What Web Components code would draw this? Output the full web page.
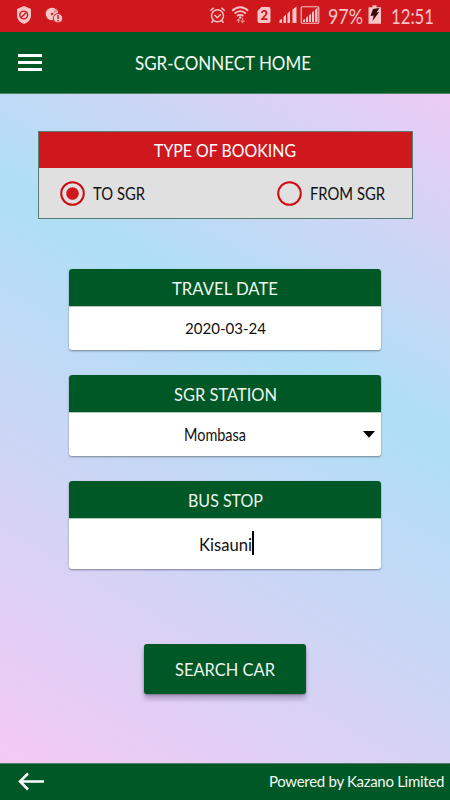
<!DOCTYPE html>
<html lang="en">
<head>
<meta charset="utf-8">
<title>SGR-Connect</title>
<style>
body{margin:0;height:800px;overflow:hidden;font-family:Lato,"Noto Sans",sans-serif}
</style>
</head>
<body>
<sgr-app></sgr-app>
<script>
const define=(name,html,setup)=>customElements.define(name,class extends HTMLElement{
  connectedCallback(){
    if(this.shadowRoot)return;
    const t=document.createElement('template');
    t.innerHTML=html;
    this.attachShadow({mode:'open'}).append(t.content.cloneNode(true));
    if(setup)setup(this);
  }
});

/* A label whose glyphs are fitted to a given advance width. */
define('fit-label',`<style>
:host{display:block;flex:none;line-height:0}
svg{display:block;overflow:visible;margin:0 -2px}
text{fill:currentColor;font-family:Lato,"Noto Sans",sans-serif}
</style><svg><text></text></svg>`,el=>{
  const w=+el.getAttribute('width'),s=+el.getAttribute('size')||18;
  const svg=el.shadowRoot.querySelector('svg'),t=svg.firstChild;
  svg.setAttribute('width',w+4);svg.setAttribute('height',24);
  t.setAttribute('x',2);
  t.setAttribute('y',el.getAttribute('baseline')||19);t.setAttribute('font-size',s);
  t.setAttribute('textLength',w);t.setAttribute('lengthAdjust','spacingAndGlyphs');
  t.textContent=el.getAttribute('text');
});

define('status-bar',`<style>
:host{display:flex;height:32px;background:#cf181e;color:#f8c5c7;align-items:center}
svg{display:block;flex:none}
</style>
<svg width="328" height="32" viewBox="0 0 328 32">
<path d="M24 6l7 3v7q0 5-7 8q-7-3-7-8V9z" fill="#f8c5c7"/>
<circle cx="23.7" cy="15" r="3.9" fill="none" stroke="#cf181e" stroke-width="1.4"/><path d="M21 17.6l5.4-5.2" stroke="#cf181e" stroke-width="1.4"/>
<circle cx="52" cy="14" r="6.3" fill="#f8c5c7"/><path d="M52 14L56 8.6L58 11z" fill="#e88d90"/><circle cx="52" cy="14" r="1.2" fill="#cf181e"/>
<circle cx="58" cy="18.2" r="4.7" fill="#f8c5c7" stroke="#cf181e"/><path d="M58 15v4m0 1v1.5" stroke="#cf181e" stroke-width="1.5"/>
<g fill="none" stroke="#f8c5c7" stroke-width="1.5"><circle cx="217.5" cy="15.8" r="6"/><path d="M210.3 10.8l3.3-3m7.8 0l3.3 3M213.3 20.5l-1.8 2.2m10.2-2.2l1.8 2.2M214.5 15l2.700 2.700l3.700-3.400"/>
<path stroke-width="1.8" d="M232.2 10.8q8-7 16 0M234.5 13.5q5.700-4.800 11.400 0M237 16q3.200-2.400 6.400 0"/></g>
<circle cx="240.2" cy="17.5" r="1.3" fill="#f8c5c7"/>
<path d="M238.500 23v-4m-1.700 2l1.700-2l1.700 2M242.700 18v4.500m-1.700-1.800l1.700 2l1.700-2" stroke="#e98a8e" stroke-width="1.100" fill="none"/>
<path d="M261.500 7h7q2 0 2 2v12q0 2-2 2h-9q-2 0-2-2V11z" fill="#f8c5c7"/>
<text x="264.200" y="19.500" text-anchor="middle" font-family="Lato,sans-serif" font-weight="900" font-size="13" fill="#cf181e">2</text>
<path d="M279.500 23v-3l2.500-1v4zM283.500 23v-6l2.500-2.500V23zM287.500 23V13.500l2.500-2.500v12zM292.500 23V9.500l4-3V23z" fill="#f8c5c7"/>
<rect x="301.200" y="6.700" width="17.600" height="16.600" rx="1" fill="none" stroke="#f8c5c7" stroke-width="1.100"/>
<path d="M303 22v-2l2-1v3zM306 22v-4l2-2v6zM309 22v-6.500l2-2V22zM312 22v-9.500l2-2V22zM315 22V10l2.500-2.500V22z" fill="#f8c5c7"/>
</svg>
<fit-label text="97%" width="35" size="20.500" style="margin-top:1px"></fit-label>
<svg width="28" height="32" viewBox="0 0 28 32"><path d="M9.500 5.300h4v2H18v16.500H5.500V7.300h4z" fill="#f8c5c7"/><path d="M10 9l6.500-1-3 4.500 2.700-.5L9.500 21l1.200-5.500-3.200.5z" fill="#36080a"/></svg>
<fit-label text="12:51" width="43" size="20.500" style="margin-top:1px"></fit-label>`);

define('app-header',`<style>
:host{display:grid;grid-template-columns:135px 1fr;height:61px;background:#005826;color:#f3f8f4;align-items:center;border-bottom:1px solid #4f8069}
svg{margin-left:18px;display:block}
</style>
<svg width="24" height="17" fill="#fff"><path d="M0 0h24v3H0zM0 7h24v3H0zM0 14h24v3H0z"/></svg>
<fit-label text="SGR-CONNECT HOME" width="176" size="19" baseline="18.5"></fit-label>`);

define('radio-option',`<style>
:host{display:flex;align-items:center;gap:8px;color:#111}
</style>
<svg width="25" height="25" viewBox="0 0 25 25"><circle cx="12.500" cy="12.500" r="11.300" fill="none" stroke="#d00b12" stroke-width="2"/><circle class="dot" cx="12.500" cy="12.500" r="6.300" fill="#cf181e"/></svg>
<slot></slot>`,el=>{if(!el.hasAttribute('checked'))el.shadowRoot.querySelector('.dot').remove()});

define('booking-type',`<style>
:host{display:block;box-sizing:border-box;width:375px;height:88px;border:1px solid #557d71;background:#e0e0e0;align-self:center}
header{height:36px;background:#cf181e;color:#fff;display:flex;align-items:center;justify-content:center}
div{height:50px;display:flex;align-items:center;justify-content:space-between;padding:0 27px 0 21px}
</style>
<header><fit-label text="TYPE OF BOOKING" width="142"></fit-label></header>
<div><radio-option checked><fit-label text="TO SGR" width="52" size="17"></fit-label></radio-option>
<radio-option><fit-label text="FROM SGR" width="75" size="17"></fit-label></radio-option></div>`);

define('field-card',`<style>
:host{display:flex;flex-direction:column;width:312px;border-radius:3px;background:#fff;overflow:hidden;box-shadow:0 1px 2px #0006;align-self:center;flex:none;color:#111}
header{height:38px;flex:none;background:#005826;color:#eef5ef;display:flex;align-items:center;justify-content:center;border-bottom:1px solid #b5c9ba;box-sizing:border-box}
div{flex:1;display:flex;align-items:center;justify-content:center}
</style>
<header><slot name="title"></slot></header><div><slot></slot></div>`);

define('select-value',`<style>
:host{flex:1;display:grid;grid-template-columns:1fr 20px;align-items:center;justify-items:center}
svg{display:block;justify-self:start;margin-left:2px}
</style><slot></slot><svg width="13" height="7"><path d="M0 0h12L6 6.800z"/></svg>`);

define('text-entry',`<style>
:host{display:flex;align-items:center;padding-left:2px}
i{display:block;width:2px;height:24px;background:#000;margin-top:-2px}
</style><slot></slot><i></i>`);

define('action-button',`<style>
:host{display:flex;align-items:center;justify-content:center;width:162px;height:50px;border-radius:3px;background:#005826;color:#eef5ef;align-self:center;box-shadow:0 5px 5px #54406855,0 1px 2px #0005}
</style><slot></slot>`);

define('app-footer',`<style>
:host{display:flex;align-items:center;justify-content:space-between;height:37px;box-sizing:border-box;background:#005826;color:#f3f8f4;padding:0 6px 1px 18px;border-top:1px solid #527d62}
span{font:15px/24px Lato,"Noto Sans",sans-serif;letter-spacing:-.3px;white-space:nowrap;margin-bottom:2px}
</style>
<svg width="27" height="19" viewBox="0 0 27 19" fill="none" stroke="#fff" stroke-width="2.500"><path d="M26 9.500H2M10 1.500L2 9.500L10 17.500"/></svg>
<span>Powered by Kazano Limited</span>`);

define('sgr-app',`<style>
:host{display:flex;flex-direction:column;width:450px;height:800px}
main{flex:1;display:flex;flex-direction:column;background:linear-gradient(210deg,#edcbf4 0%,#aedff6 37.5%,#f4c9f4 100%);min-height:0}
booking-type{margin-top:37px}
</style>
<status-bar></status-bar><app-header></app-header>
<main>
<booking-type></booking-type>
<field-card style="height:81px;margin-top:50px"><fit-label slot="title" text="TRAVEL DATE" width="106"></fit-label><fit-label text="2020-03-24" width="81" size="16" baseline="17"></fit-label></field-card>
<field-card style="height:81px;margin-top:25px"><fit-label slot="title" text="SGR STATION" width="103"></fit-label><select-value><fit-label text="Mombasa" width="62" size="17" baseline="18"></fit-label></select-value></field-card>
<field-card style="height:88px;margin-top:25px"><fit-label slot="title" text="BUS STOP" width="75"></fit-label><text-entry><fit-label text="Kisauni" width="53" size="17" baseline="19"></fit-label></text-entry></field-card>
<action-button style="margin-top:75px"><fit-label text="SEARCH CAR" width="100"></fit-label></action-button>
</main>
<app-footer></app-footer>`);
</script>
</body>
</html>
